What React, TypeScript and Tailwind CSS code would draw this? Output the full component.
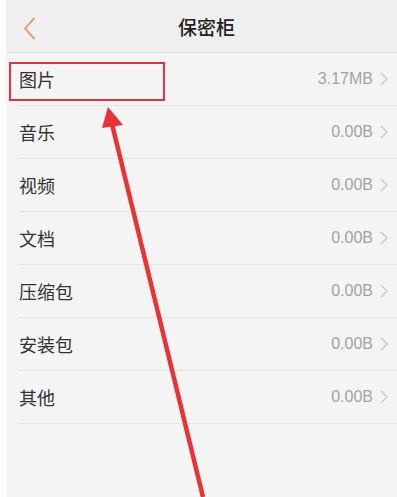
import React from "react";

const rows = [
  { label: "图片", value: "3.17MB" },
  { label: "音乐", value: "0.00B" },
  { label: "视频", value: "0.00B" },
  { label: "文档", value: "0.00B" },
  { label: "压缩包", value: "0.00B" },
  { label: "安装包", value: "0.00B" },
  { label: "其他", value: "0.00B" },
];

export default function App() {
  return (
    <div
      className="relative flex w-[397px] h-[497px] overflow-hidden bg-[#fafafa]"
      style={{ fontFamily: '"Noto Sans CJK SC", "Noto Sans", sans-serif' }}
    >
      <div className="w-[6px] shrink-0 bg-[#fbfbfb]" />
      <div className="flex-1 flex flex-col bg-[#f4f4f4]">
        <div className="h-[53px] shrink-0 flex items-center bg-[#efefef] border-b border-[#e2dede] relative">
          <svg className="absolute left-[17px] top-[17px]" width="13" height="23" viewBox="0 0 13 23">
            <path d="M11 1.5 L2 11.5 L11 21.5" fill="none" stroke="#e8925a" strokeWidth="1.8" strokeLinecap="round" strokeLinejoin="round" />
          </svg>
          <div className="flex-1 text-center text-[19px] font-medium text-[#222] leading-none ml-[10px]">保密柜</div>
        </div>
        {rows.map((r) => (
          <div key={r.label} className="h-[53px] shrink-0 ml-[12px] border-b border-[#e4e4e4] flex items-center">
            <span className="pl-[1px] text-[18px] text-[#333] leading-none">{r.label}</span>
            <span
              className="ml-auto text-[16px] text-[#a3a3a3] leading-none"
              style={{ fontFamily: '"Liberation Sans", Arial, sans-serif' }}
            >
              {r.value}
            </span>
            <svg className="ml-[7px] mr-[9px]" width="8" height="14" viewBox="0 0 8 14">
              <path d="M1 1 L7 7 L1 13" fill="none" stroke="#c8c8c8" strokeWidth="1.4" strokeLinejoin="round" />
            </svg>
          </div>
        ))}
      </div>
      <div className="absolute left-[9px] top-[62px] w-[156px] h-[39px] border-2 border-[#e2343a]" />
      <svg className="absolute left-0 top-0 pointer-events-none" width="397" height="497" viewBox="0 0 397 497">
        <path d="M111.5 122 L203 497" stroke="#ea3136" strokeWidth="4.5" fill="none" />
        <path d="M108 107 L123 125 L102 128 Z" fill="#ea3136" />
      </svg>
    </div>
  );
}
